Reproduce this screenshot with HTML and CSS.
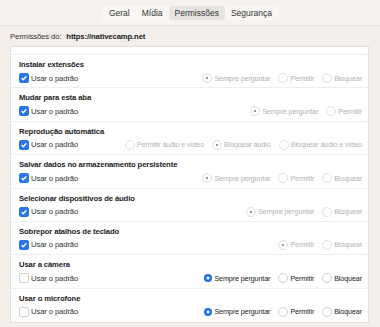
FILE: index.html
```html
<!DOCTYPE html>
<html lang="pt-BR">
<head>
  <meta charset="UTF-8" />
  <title>Permissões</title>
  <link rel="stylesheet" href="styles.css">
</head>
<body>
  <div class="toolbar">
    <div class="tabs">
      <span class="tab">Geral</span>
      <span class="tab">Mídia</span>
      <span class="tab active">Permissões</span>
      <span class="tab">Segurança</span>
    </div>
  </div>

  <div class="site">Permissões do: <strong>https://nativecamp.net</strong></div>

  <div class="panel">
    <div class="perm">
      <div class="perm-title">Instalar extensões</div>
      <div class="perm-line">
        <span class="check on">Usar o padrão</span>
        <div class="options off">
          <span class="opt sel">Sempre perguntar</span>
          <span class="opt">Permitir</span>
          <span class="opt">Bloquear</span>
        </div>
      </div>
    </div>

    <div class="perm">
      <div class="perm-title">Mudar para esta aba</div>
      <div class="perm-line">
        <span class="check on">Usar o padrão</span>
        <div class="options off">
          <span class="opt sel">Sempre perguntar</span>
          <span class="opt">Permitir</span>
        </div>
      </div>
    </div>

    <div class="perm">
      <div class="perm-title">Reprodução automática</div>
      <div class="perm-line">
        <span class="check on">Usar o padrão</span>
        <div class="options off">
          <span class="opt">Permitir áudio e vídeo</span>
          <span class="opt sel">Bloquear áudio</span>
          <span class="opt">Bloquear áudio e vídeo</span>
        </div>
      </div>
    </div>

    <div class="perm">
      <div class="perm-title">Salvar dados no armazenamento persistente</div>
      <div class="perm-line">
        <span class="check on">Usar o padrão</span>
        <div class="options off">
          <span class="opt sel">Sempre perguntar</span>
          <span class="opt">Permitir</span>
          <span class="opt">Bloquear</span>
        </div>
      </div>
    </div>

    <div class="perm">
      <div class="perm-title">Selecionar dispositivos de áudio</div>
      <div class="perm-line">
        <span class="check on">Usar o padrão</span>
        <div class="options off">
          <span class="opt sel">Sempre perguntar</span>
          <span class="opt">Bloquear</span>
        </div>
      </div>
    </div>

    <div class="perm">
      <div class="perm-title">Sobrepor atalhos de teclado</div>
      <div class="perm-line">
        <span class="check on">Usar o padrão</span>
        <div class="options off">
          <span class="opt sel">Permitir</span>
          <span class="opt">Bloquear</span>
        </div>
      </div>
    </div>

    <div class="perm">
      <div class="perm-title">Usar a câmera</div>
      <div class="perm-line">
        <span class="check">Usar o padrão</span>
        <div class="options">
          <span class="opt sel">Sempre perguntar</span>
          <span class="opt">Permitir</span>
          <span class="opt">Bloquear</span>
        </div>
      </div>
    </div>

    <div class="perm">
      <div class="perm-title">Usar o microfone</div>
      <div class="perm-line">
        <span class="check">Usar o padrão</span>
        <div class="options">
          <span class="opt sel">Sempre perguntar</span>
          <span class="opt">Permitir</span>
          <span class="opt">Bloquear</span>
        </div>
      </div>
    </div>
  </div>
</body>
</html>
```

FILE: styles.css
```css
* {
  box-sizing: border-box;
}

body {
  margin: 0;
  background: #f3eeea;
  font-family: 'Liberation Sans', Arial, sans-serif;
  color: #222;
  font-size: 7.7px;
  letter-spacing: -0.12px;
  white-space: nowrap;
}

.toolbar {
  height: 26px;
  padding-top: 6px;
  background: #f6f2ef;
  border-bottom: 1px solid #e6e1dd;
  display: flex;
  justify-content: center;
}

.tabs {
  display: flex;
  height: 14px;
  padding: 0 1px 0 2px;
  background: #f9f6f3;
  border-radius: 3px;
}

.tab {
  padding: 0 6px;
  font-size: 8.5px;
  letter-spacing: 0;
  line-height: 14px;
  color: #333;
  border-radius: 3px;
}

.tab.active {
  background: #e7e3e0;
}

.site {
  padding: 5px 10px 0;
  height: 20px;
  line-height: 11px;
  color: #333;
}

.site strong {
  font-weight: bold;
  color: #222;
  margin-left: 3px;
}

.panel {
  margin: 0 11px 0 10px;
  background: #fff;
  border: 1px solid #e4e0dc;
  padding-top: 7px;
  height: 277px;
}

.perm {
  height: 33.4px;
  border-top: 1px solid #efefef;
  padding: 3px 6px 0 8px;
}

.perm-title {
  font-weight: bold;
  line-height: 13px;
  color: #1c1c1c;
}

.perm-line {
  display: flex;
  align-items: center;
  justify-content: space-between;
  height: 14px;
}

.check {
  display: flex;
  align-items: center;
  gap: 2px;
  color: #333;
}

.check::before {
  content: "";
  flex: none;
  width: 8px;
  height: 8px;
  border: 1px solid #cfcfcf;
  border-radius: 2px;
  background: #fff;
}

.check.on::before {
  border-color: #2a76e8;
  background: #2a76e8 url("data:image/svg+xml,%3Csvg xmlns='http://www.w3.org/2000/svg' viewBox='0 0 8 8'%3E%3Cpath d='M1.6 4.1 3.2 5.7 6.4 2.3' fill='none' stroke='white' stroke-width='1.3'/%3E%3C/svg%3E") center / 8px 8px no-repeat;
}

.options {
  display: flex;
  gap: 8px;
  font-size: 7.2px;
  color: #222;
}

.opt {
  display: flex;
  align-items: center;
  gap: 2px;
}

.opt::before {
  content: "";
  flex: none;
  width: 8px;
  height: 8px;
  border: 1px solid #cfcfcf;
  border-radius: 50%;
  background: #fff;
}

.opt.sel::before {
  border: none;
  background: radial-gradient(circle, #fff 0 1.3px, #1670f0 1.8px);
}

.options.off {
  color: #b2b2b2;
}

.options.off .opt::before {
  border: 1px solid #e2e2e2;
}

.options.off .opt.sel::before {
  border: 1px solid #dcdcdc;
  background: radial-gradient(circle, #9a9a9a 0 1.1px, #fff 1.6px);
}
```
